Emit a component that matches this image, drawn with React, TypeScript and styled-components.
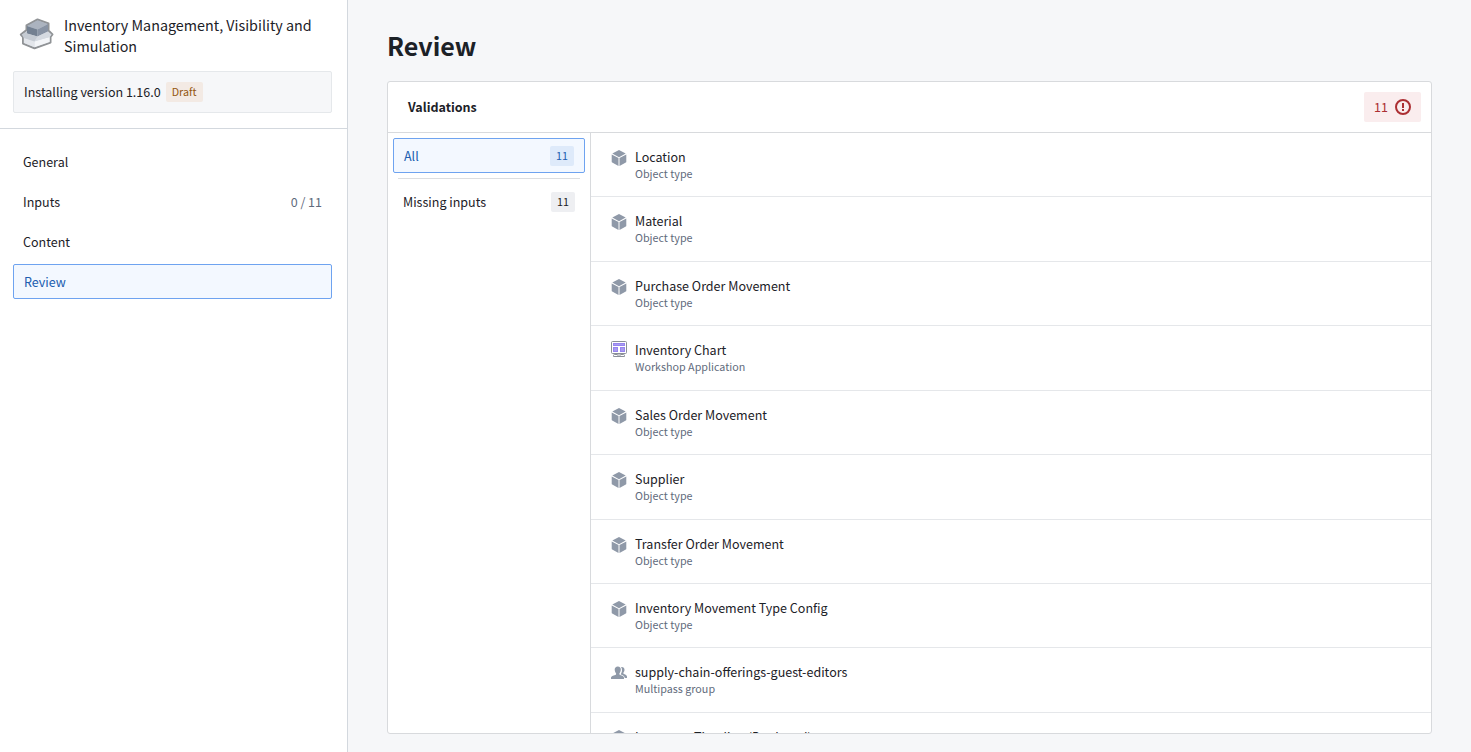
import React from "react";
import styled, { createGlobalStyle, css } from "styled-components";

const GlobalStyle = createGlobalStyle`
  *, *::before, *::after { box-sizing: border-box; }
  body {
    margin: 0;
    font-family: "Noto Sans CJK SC", "Noto Sans", sans-serif;
    font-size: 14px;
    font-size-adjust: 0.486;
    line-height: 18px;
    color: #1c2127;
    background: #f6f7f9;
  }
  h1, h2, p, ul { margin: 0; padding: 0; }
  button { font: inherit; font-size-adjust: inherit; }
`;

const Page = styled.div`
  display: flex;
  height: 100vh;
`;

const Sidebar = styled.aside`
  flex: 0 0 348px;
  background: #fff;
  border-right: 1px solid #d3d8de;
`;

const SidebarHeader = styled.header`
  padding: 14px 15px 15px 13px;
  border-bottom: 1px solid #d3d8de;
`;

const Product = styled.div`
  display: flex;
  gap: 10px;
  padding-left: 6px;

  svg { flex-shrink: 0; }
`;

const ProductName = styled.h2`
  font-size: 16px;
  font-weight: 400;
  line-height: 21px;
`;

const VersionBox = styled.div`
  display: flex;
  align-items: center;
  gap: 5px;
  height: 42px;
  margin-top: 15px;
  padding: 0 10px;
  background: #f6f7f9;
  border: 1px solid #e5e8eb;
  border-radius: 2px;
`;

const Tag = styled.span<{ $tone: "draft" | "blue" | "gray" }>`
  padding: 0 6px;
  border-radius: 2px;
  font-size: 12px;
  line-height: 20px;
  ${({ $tone }) =>
    $tone === "draft"
      ? css`background: #f3eae4; color: #935610;`
      : $tone === "blue"
        ? css`background: #deeafa; color: #215db0;`
        : css`background: #eeeff2; color: #1c2127;`}
`;

const Nav = styled.nav`
  display: flex;
  flex-direction: column;
  gap: 5px;
  padding: 15px 15px 15px 13px;
`;

const NavItem = styled.button<{ $active?: boolean }>`
  display: flex;
  align-items: center;
  justify-content: space-between;
  width: 100%;
  height: 35px;
  padding: 0 10px;
  text-align: left;
  color: inherit;
  background: none;
  border: 0;
  border-radius: 2px;
  cursor: pointer;
  ${({ $active }) =>
    $active &&
    css`
      color: #215db0;
      background: #f3f8ff;
      border: 1px solid #6ea3f0;
    `}
`;

const Muted = styled.span`
  color: #5f6b7c;
`;

const Main = styled.main`
  flex: 1;
  min-width: 0;
  display: flex;
  flex-direction: column;
  gap: 20px;
  padding: 29px 39px 18px;
`;

const Title = styled.h1`
  font-size: 28px;
  font-weight: 600;
  line-height: 32px;
`;

const Card = styled.section`
  flex: 1;
  min-height: 0;
  display: flex;
  flex-direction: column;
  background: #fff;
  border: 1px solid #d8dadd;
  border-radius: 3px;
`;

const CardHeader = styled.header`
  display: flex;
  align-items: center;
  justify-content: space-between;
  padding: 10px 10px 10px 20px;
  border-bottom: 1px solid #d8dadd;
`;

const CardTitle = styled.h2`
  font-size: 14px;
  font-weight: 600;
`;

const ErrorCount = styled.div`
  display: flex;
  align-items: center;
  gap: 7px;
  height: 30px;
  padding: 0 10px;
  color: #ac2f33;
  background: #faedee;
  border-radius: 2px;
`;

const CardBody = styled.div`
  flex: 1;
  min-height: 0;
  display: flex;
`;

const Filters = styled.div`
  flex: 0 0 203px;
  padding: 5px;
  border-right: 1px solid #d8dadd;
`;

const Divider = styled.hr`
  margin: 5px;
  border: 0;
  border-top: 1px solid #dcdee1;
`;

const List = styled.ul`
  flex: 1;
  min-width: 0;
  overflow-y: auto;
  scrollbar-width: none;
  line-height: 1.286;
  list-style: none;
`;

const Row = styled.li`
  display: flex;
  gap: 8px;
  padding: 15px 20px;
  border-bottom: 1px solid #e5e7ea;
`;

const RowIcon = styled.span<{ $raised?: boolean }>`
  display: flex;
  padding-top: ${({ $raised }) => ($raised ? 0 : 2)}px;
`;

const RowKind = styled.p`
  font-size: 12px;
  color: #5f6b7c;
`;

const ProductIcon = () => (
  <svg width="35" height="36" viewBox="0 -1 35 36" aria-hidden="true">
    <path d="M7.500 10.500 18.500 4.500 29.500 8.500V15.500L33.500 19.500 31.500 22V27.500L15.500 33.300 4 28.500V22L1.800 19.500 7.500 15Z" fill="#cfd5dd" stroke="#909396" strokeWidth="2" strokeLinejoin="round" />
    <path d="M8 11 18.500 5.300 29 9 18.500 14.500Z" fill="#abb3bf" />
    <path d="M8 11 18.500 14.500V21.500L8 18.500Z" fill="#738091" />
    <path d="M18.500 14.500 29 9V16.500L18.500 21.500Z" fill="#8893a4" />
    <path d="M4.800 22.500 15.500 26V32.300L4.800 28Z" fill="#e3e6eb" />
    <path d="M15.500 26 30.700 22V27L15.500 32.300Z" fill="#f3f5f8" />
    <path d="M2.800 19.500 8 16.500V18.500L18.500 21.500 15.500 26.500 4.800 23Z" fill="#c5cbd3" />
    <path d="M18.500 21.500 29 16.500 32.500 19.500 30.700 22 15.500 26.500Z" fill="#d5dae1" />
  </svg>
);

const CubeIcon = () => (
  <svg width="16" height="16" viewBox="0 0 16 16" fill="#8f99a8" aria-hidden="true">
    <path d="M1.300 3.500 7.500.200a1 1 0 0 1 1 0l6.200 3.300L8 7.200Z" />
    <path d="M.700 4.400 7.500 8.100V16L1.200 12.600A1 1 0 0 1 .700 11.700Z" />
    <path d="M15.300 4.400 8.500 8.100V16l6.300-3.400a1 1 0 0 0 .5-.9Z" />
  </svg>
);

const WorkshopIcon = () => (
  <svg width="16" height="16" viewBox="0 0 16 16" fill="none" aria-hidden="true">
    <rect x="0.500" y="0.500" width="15" height="12" rx="1" fill="#fff" stroke="#8a8f98" />
    <rect x="2.500" y="2.500" width="11" height="2" fill="#a99bf0" stroke="#9684f0" />
    <rect x="2.500" y="6.500" width="4" height="4" fill="#a99bf0" stroke="#9684f0" />
    <rect x="9.500" y="6.500" width="4" height="4" fill="#a99bf0" stroke="#9684f0" />
    <path d="M6 13v1h4v-1M6 13.500H3.500a1 1 0 0 0-1 1v1h11v-1a1 1 0 0 0-1-1H10" stroke="#8a8f98" />
  </svg>
);

const GroupIcon = () => (
  <svg width="16" height="16" viewBox="0 0 16 16" fill="#8f99a8" aria-hidden="true">
    <path d="M6.800 1.500c2 0 3.200 1.400 3 3.300-.1 1.700-.9 2.800-1.300 3.500-.3.700 0 1.500.7 1.800 2 .8 3.600 1.200 3.800 2.400V14H0v-1.500c.2-1.200 2-1.600 4.300-2.400.8-.3 1-1.100.7-1.800-.4-.7-1.200-1.800-1.300-3.500-.1-1.900 1.100-3.300 3.100-3.300Z" />
    <path d="M10 2c1.900-.5 3.600.7 3.500 2.800 0 1.400-.6 2.100-1 2.800-.3.600-.1 1.300.5 1.500 1.600.7 2.800 1.300 3 2.400V13h-2.200c-.2-1.900-1.900-2.600-4-3.400-.2-.100-.2-.300 0-.7.600-1 1.200-2.400 1.200-4 0-1.200-.4-2.100-1-2.900Z" />
  </svg>
);

const ErrorIcon = () => (
  <svg width="16" height="16" viewBox="0 0 16 16" fill="#ac2f33" aria-hidden="true">
    <path d="M8 0a8 8 0 1 0 0 16A8 8 0 0 0 8 0Zm0 14A6 6 0 1 1 8 2a6 6 0 0 1 0 12ZM7 4h2v5H7Zm0 6h2v2H7Z" />
  </svg>
);

type Kind = "Object type" | "Workshop Application" | "Multipass group";

const icons: Record<Kind, () => React.JSX.Element> = {
  "Object type": CubeIcon,
  "Workshop Application": WorkshopIcon,
  "Multipass group": GroupIcon,
};

const validations: { name: string; kind: Kind }[] = [
  { name: "Location", kind: "Object type" },
  { name: "Material", kind: "Object type" },
  { name: "Purchase Order Movement", kind: "Object type" },
  { name: "Inventory Chart", kind: "Workshop Application" },
  { name: "Sales Order Movement", kind: "Object type" },
  { name: "Supplier", kind: "Object type" },
  { name: "Transfer Order Movement", kind: "Object type" },
  { name: "Inventory Movement Type Config", kind: "Object type" },
  { name: "supply-chain-offerings-guest-editors", kind: "Multipass group" },
  { name: "Inventory Timeline (Deployed)", kind: "Object type" },
];

export default function App() {
  return (
    <>
      <GlobalStyle />
      <Page>
        <Sidebar>
          <SidebarHeader>
            <Product>
              <ProductIcon />
              <ProductName>Inventory Management, Visibility and Simulation</ProductName>
            </Product>
            <VersionBox>
              <span>Installing version 1.16.0</span>
              <Tag $tone="draft">Draft</Tag>
            </VersionBox>
          </SidebarHeader>
          <Nav>
            <NavItem>General</NavItem>
            <NavItem>
              Inputs <Muted>0 / 11</Muted>
            </NavItem>
            <NavItem>Content</NavItem>
            <NavItem $active aria-current="page">Review</NavItem>
          </Nav>
        </Sidebar>
        <Main>
          <Title>Review</Title>
          <Card>
            <CardHeader>
              <CardTitle>Validations</CardTitle>
              <ErrorCount>
                11 <ErrorIcon />
              </ErrorCount>
            </CardHeader>
            <CardBody>
              <Filters>
                <NavItem $active>
                  All <Tag $tone="blue">11</Tag>
                </NavItem>
                <Divider />
                <NavItem>
                  Missing inputs <Tag $tone="gray">11</Tag>
                </NavItem>
              </Filters>
              <List>
                {validations.map(({ name, kind }) => {
                  const Icon = icons[kind];
                  return (
                    <Row key={name}>
                      <RowIcon $raised={kind === "Workshop Application"}>
                        <Icon />
                      </RowIcon>
                      <div>
                        <p>{name}</p>
                        <RowKind>{kind}</RowKind>
                      </div>
                    </Row>
                  );
                })}
              </List>
            </CardBody>
          </Card>
        </Main>
      </Page>
    </>
  );
}
